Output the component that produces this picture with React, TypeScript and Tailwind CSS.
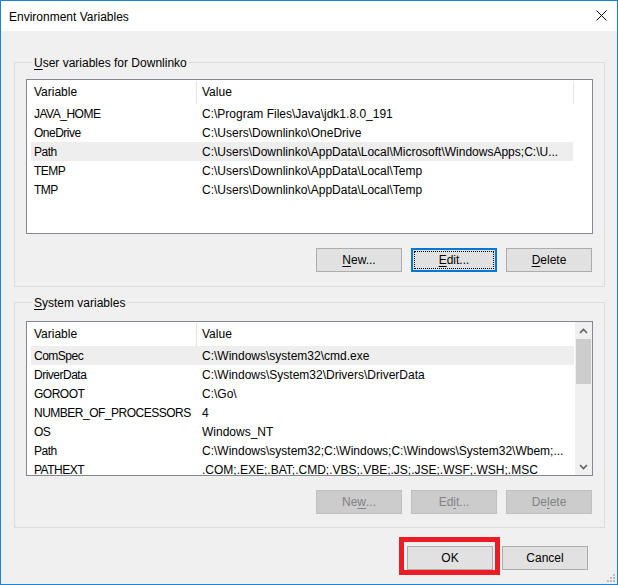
import React from 'react';

type EnvVar = { name: string; value: string };

const USER_VARS: EnvVar[] = [
  { name: 'JAVA_HOME', value: 'C:\\Program Files\\Java\\jdk1.8.0_191' },
  { name: 'OneDrive', value: 'C:\\Users\\Downlinko\\OneDrive' },
  { name: 'Path', value: 'C:\\Users\\Downlinko\\AppData\\Local\\Microsoft\\WindowsApps;C:\\U...' },
  { name: 'TEMP', value: 'C:\\Users\\Downlinko\\AppData\\Local\\Temp' },
  { name: 'TMP', value: 'C:\\Users\\Downlinko\\AppData\\Local\\Temp' },
];

const SYSTEM_VARS: EnvVar[] = [
  { name: 'ComSpec', value: 'C:\\Windows\\system32\\cmd.exe' },
  { name: 'DriverData', value: 'C:\\Windows\\System32\\Drivers\\DriverData' },
  { name: 'GOROOT', value: 'C:\\Go\\' },
  { name: 'NUMBER_OF_PROCESSORS', value: '4' },
  { name: 'OS', value: 'Windows_NT' },
  { name: 'Path', value: 'C:\\Windows\\system32;C:\\Windows;C:\\Windows\\System32\\Wbem;...' },
  { name: 'PATHEXT', value: '.COM;.EXE;.BAT;.CMD;.VBS;.VBE;.JS;.JSE;.WSF;.WSH;.MSC' },
];

// Accelerator label: the letter at `at` gets underlined, like Win32 "&New..."
const Label = ({ text, at }: { text: string; at: number }) => (
  <>
    {text.slice(0, at)}
    <u className="underline-offset-[2px]">{text[at]}</u>
    {text.slice(at + 1)}
  </>
);

const Button = ({
  text,
  at,
  disabled,
  focused,
}: {
  text: string;
  at?: number;
  disabled?: boolean;
  focused?: boolean;
}) => {
  const label = at !== undefined ? <Label text={text} at={at} /> : text;
  if (disabled) {
    return (
      <div className="w-[86px] h-[24px] flex items-center justify-center bg-[#cccccc] border border-[#bfbfbf] text-[#838383]">
        {label}
      </div>
    );
  }
  if (focused) {
    return (
      <div className="relative w-[86px] h-[24px] flex items-center justify-center bg-[#e1e1e1] border-2 border-[#0078d7]">
        <span className="absolute inset-[1px] border border-dotted border-black" />
        {label}
      </div>
    );
  }
  return (
    <div className="w-[86px] h-[24px] flex items-center justify-center bg-[#e1e1e1] border border-[#adadad]">
      {label}
    </div>
  );
};

const Header = ({ thirdCol }: { thirdCol: boolean }) => (
  <div className="flex h-[24px] shrink-0">
    <div className="w-[169px] pl-[7px] pt-[3px]">Variable</div>
    <div className="w-px h-[23px] mt-[1px] bg-[#e5e5e5]" />
    <div className="w-[376px] pl-[5px] pt-[3px]">Value</div>
    {thirdCol && <div className="w-px h-[23px] mt-[1px] bg-[#e5e5e5]" />}
  </div>
);

const Rows = ({ items, selected, width }: { items: EnvVar[]; selected: number; width: string }) => (
  <div className="flex flex-col">
    {items.map((v, i) => (
      <div
        key={v.name + i}
        className={`ml-[4px] ${width} h-[19px] shrink-0 pt-[1px] flex whitespace-nowrap ${
          i === selected ? 'bg-[#eeeeee]' : ''
        }`}
      >
        <div className="w-[171px] pl-[3px] shrink-0 tracking-[-0.5px]">{v.name}</div>
        <div className="flex-1 overflow-hidden">{v.value}</div>
      </div>
    ))}
  </div>
);

const Chevron = ({ up }: { up: boolean }) => (
  <svg width="9" height="6" viewBox="0 0 9 6" className="block">
    <path
      d={up ? 'M1 5 L4.5 1.5 L8 5' : 'M1 1 L4.5 4.5 L8 1'}
      fill="none"
      stroke="#606060"
      strokeWidth="1.6"
    />
  </svg>
);

export default function App() {
  return (
    <div
      className="relative w-[618px] h-[585px] border border-[#1883d7] flex flex-col text-[12px] leading-[19px] text-black"
      style={{ fontFamily: '"Liberation Sans", Arial, sans-serif' }}
    >
      {/* Title bar */}
      <div className="h-[30px] shrink-0 bg-white flex items-center justify-between pl-[8px] pr-[10px]">
        <span className="pt-[2px]">Environment Variables</span>
        <svg width="11" height="11" viewBox="0 0 11 11" className="mb-[1px]">
          <path d="M0.5 0.5 L10.5 10.5 M10.5 0.5 L0.5 10.5" stroke="#000" strokeWidth="1" />
        </svg>
      </div>

      <div className="flex-1 bg-[#f0f0f0] pl-[13px] pr-[12px] pt-[23px] flex flex-col">
        {/* User variables */}
        <fieldset className="w-[591px] border border-[#dcdcdc] px-[11px] pt-[9px] pb-[14px]">
          <legend className="ml-[6px] px-[2px] leading-[16px]">
            <span className="block pt-[1px] h-[16px]">
              <Label text="User variables for Downlinko" at={0} />
            </span>
          </legend>
          <div className="h-[155px] border border-[#828790] bg-white flex flex-col overflow-hidden">
            <Header thirdCol />
            <Rows items={USER_VARS} selected={2} width="w-[542px]" />
          </div>
          <div className="mt-[14px] flex justify-end gap-[9px] pr-[1px]">
            <Button text="New..." at={0} />
            <Button text="Edit..." at={0} focused />
            <Button text="Delete" at={0} />
          </div>
        </fieldset>

        {/* System variables */}
        <fieldset className="mt-[7px] w-[591px] border border-[#dcdcdc] px-[11px] pt-[11px] pb-[13px]">
          <legend className="ml-[6px] px-[2px] leading-[16px]">
            <span className="block pt-[1px] h-[16px]">
              <Label text="System variables" at={0} />
            </span>
          </legend>
          <div className="h-[155px] border border-[#828790] bg-white flex overflow-hidden">
            <div className="flex-1 flex flex-col overflow-hidden">
              <Header thirdCol={false} />
              <Rows items={SYSTEM_VARS} selected={0} width="w-[543px]" />
            </div>
            <div className="w-[17px] shrink-0 bg-[#f0f0f0] flex flex-col items-center">
              <div className="h-[17px] flex items-center justify-center">
                <Chevron up />
              </div>
              <div className="w-[15px] h-[45px] bg-[#cdcdcd]" />
              <div className="flex-1" />
              <div className="h-[17px] flex items-center justify-center">
                <Chevron up={false} />
              </div>
            </div>
          </div>
          <div className="mt-[14px] flex justify-end gap-[9px] pr-[1px]">
            <Button text="New..." at={2} disabled />
            <Button text="Edit..." at={2} disabled />
            <Button text="Delete" at={2} disabled />
          </div>
        </fieldset>

        {/* Dialog buttons */}
        <div className="mt-[18px] flex justify-end gap-[9px] pr-[17px]">
          <div className="relative">
            <Button text="OK" />
            <div className="absolute left-[-8px] top-[-9px] w-[101px] h-[38px] border-[5px] border-[#ed1c24]" />
          </div>
          <Button text="Cancel" />
        </div>
      </div>

      {/* Size grip */}
      <svg width="8" height="8" viewBox="0 0 8 8" className="absolute right-[2px] bottom-[2px]">
        <rect x="6" y="0" width="2" height="2" fill="#bcbcbc" />
        <rect x="3" y="3" width="2" height="2" fill="#bcbcbc" />
        <rect x="6" y="3" width="2" height="2" fill="#bcbcbc" />
        <rect x="0" y="6" width="2" height="2" fill="#bcbcbc" />
        <rect x="3" y="6" width="2" height="2" fill="#bcbcbc" />
        <rect x="6" y="6" width="2" height="2" fill="#bcbcbc" />
      </svg>
    </div>
  );
}
